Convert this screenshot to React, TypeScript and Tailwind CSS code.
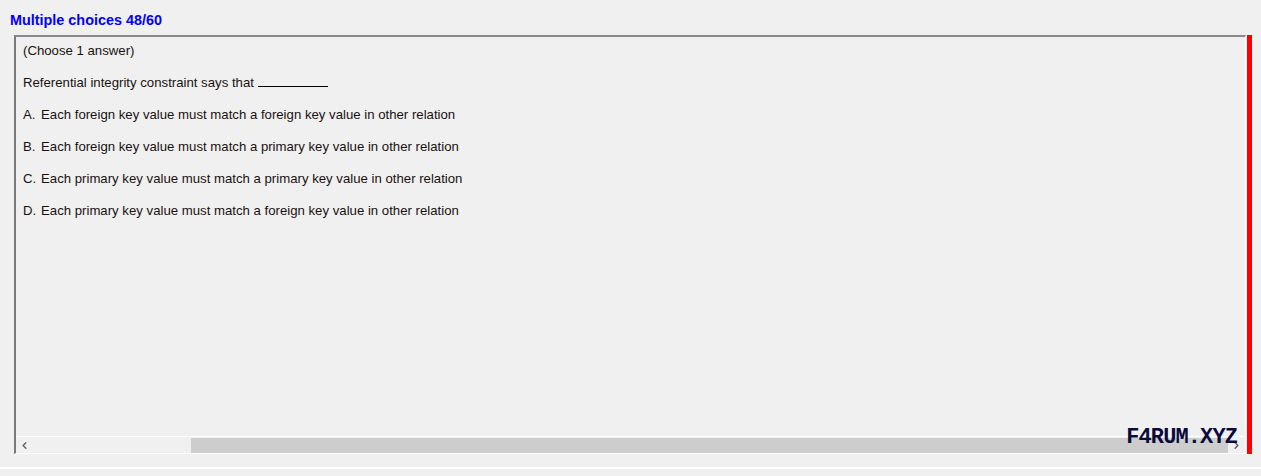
import { ChevronLeft, ChevronRight } from "lucide-react"

const options = [
  { k: "A.", t: "Each foreign key value must match a foreign key value in other relation" },
  { k: "B.", t: "Each foreign key value must match a primary key value in other relation" },
  { k: "C.", t: "Each primary key value must match a primary key value in other relation" },
  { k: "D.", t: "Each primary key value must match a foreign key value in other relation" },
]

const App = () => {
  return (
    <div className="w-[1261px] h-[476px] bg-[#f0f0f0] flex flex-col overflow-hidden font-['Liberation_Sans',Arial,sans-serif]">
      <div className="h-[35px] pl-[10px] pt-[12px] text-[14.4px] font-bold text-[#0000ff] leading-[16px]">
        Multiple choices 48/60
      </div>
      <div className="flex h-[419px] pl-[14px]">
        <div className="relative flex-1 flex flex-col border-l-2 border-t-2 border-l-[#7a7a7a] border-t-[#8a8a8a] border-r border-b border-r-white border-b-white">
          <div className="flex-1 pl-[7px] pt-[6px] text-[13.2px] text-[#1a1010] leading-[15px]">
            <p className="h-[32px]">(Choose 1 answer)</p>
            <p className="h-[32px]">
              Referential integrity constraint says that{" "}
              <span className="inline-block w-[70px] border-b border-black align-baseline" />
            </p>
            {options.map((o) => (
              <p key={o.k} className="h-[32px] flex">
                <span className="w-[18px]">{o.k}</span>
                <span>{o.t}</span>
              </p>
            ))}
          </div>
          <div className="h-[17px] flex items-center bg-[#f0f0f0] border-t border-white">
            <div className="w-[17px] flex justify-center text-[#606060]">
              <ChevronLeft size={11} strokeWidth={3} />
            </div>
            <div className="w-[158px]" />
            <div className="flex-1 h-[15px] bg-[#cdcdcd]" />
            <div className="w-[17px] flex justify-center text-[#606060]">
              <ChevronRight size={11} strokeWidth={3} />
            </div>
          </div>
          <div className="absolute right-[8px] bottom-[3px] text-[22px] leading-[24px] font-bold text-[#0b0b3b] font-['Liberation_Mono',monospace] tracking-[-0.9px]">
            F4RUM.XYZ
          </div>
        </div>
        <div className="w-[1px]" />
        <div className="w-[5px] bg-[#ff0000]" />
        <div className="w-[9px]" />
      </div>
      <div className="h-[13px]" />
      <div className="h-[2px] bg-white" />
      <div className="flex-1" />
    </div>
  )
}

export default App
